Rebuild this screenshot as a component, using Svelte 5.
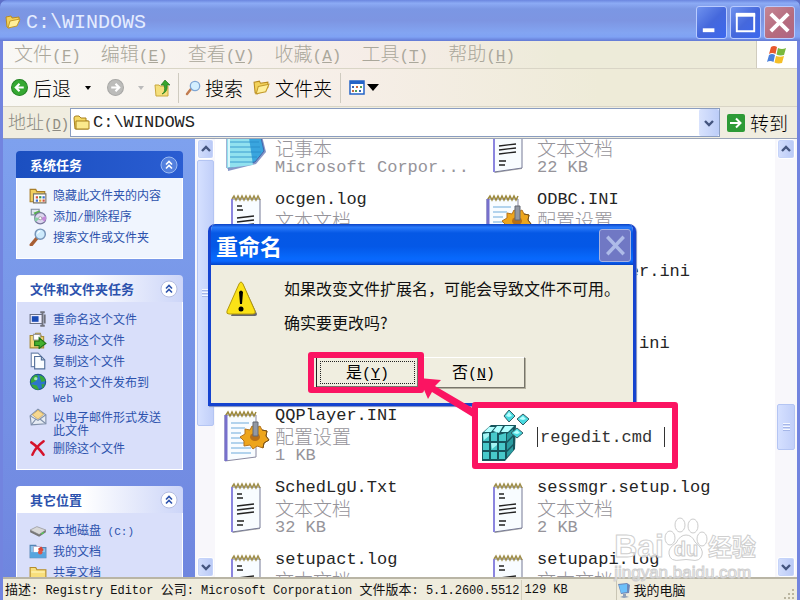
<script>
  const menus = [
    ['文件', 'F'], ['编辑', 'E'], ['查看', 'V'], ['收藏', 'A'], ['工具', 'T'], ['帮助', 'H'],
  ];
  const panels = [
    {
      title: '系统任务', main: true,
      links: [['contents', '隐藏此文件夹的内容'], ['programs', '添加/删除程序'], ['lens', '搜索文件或文件夹']],
    },
    {
      title: '文件和文件夹任务',
      links: [
        ['rename', '重命名这个文件'], ['move', '移动这个文件'], ['copy', '复制这个文件'],
        ['globe', '将这个文件发布到 Web'], ['mail', '以电子邮件形式发送此文件'], ['remove', '删除这个文件'],
      ],
    },
    { title: '其它位置', links: [['disk', '本地磁盘 (C:)'], ['docs', '我的文档'], ['folder', '共享文档']] },
  ];
  const files = [
    ['notepad', 'notepad.exe', '记事本', 'Microsoft Corpor...'],
    ['text', 'ntdtcsetup.log', '文本文档', '22 KB'],
    ['text', 'ocgen.log', '文本文档', '12 KB'],
    ['config', 'ODBC.INI', '配置设置', '1 KB'],
    ['text', 'ocmsn.log', '文本文档', '1 KB'],
    ['config', 'PowerPlayer.ini', '配置设置', '1 KB'],
    ['text', 'ocsetup.log', '文本文档', '2 KB'],
    ['config', 'PowerRead.ini', '配置设置', '1 KB'],
    ['config', 'QQPlayer.INI', '配置设置', '1 KB'],
    ['registry', 'regedit.cmd'],
    ['text', 'SchedLgU.Txt', '文本文档', '32 KB'],
    ['text', 'sessmgr.setup.log', '文本文档', '2 KB'],
    ['text', 'setupact.log', '文本文档', '1 KB'],
    ['text', 'setupapi.log', '文本文档', '1 KB'],
  ];
  let address = $state('C:\\WINDOWS');
  let newName = $state('regedit.cmd');

  // Splits a string so Latin and Chinese runs can take their own sizes.
  const runs = (text) => text.match(/[\x20-\x7e]+|[^\x20-\x7e]+/g) ?? [];
  const isLatin = (run) => /^[\x20-\x7e]/.test(run);
</script>

{#snippet mixed(text)}{#each runs(text) as run}<span class={isLatin(run) ? 'lat' : 'cjk'}>{run}</span>{/each}{/snippet}

{#snippet chevron(up)}
  <svg viewBox="0 0 10 8" width="10" height="8"><path d={up ? 'M1 6 5 2 9 6' : 'M1 2 5 6 9 2'} fill="none" stroke="#44557f" stroke-width="2.4" /></svg>
{/snippet}

{#snippet scrollbar(cls)}
  <div class="scroll {cls}">
    <button class="arrow" aria-label="向上滚动">{@render chevron(true)}</button>
    <div class="track"><div class="thumb"><i></i></div></div>
    <button class="arrow" aria-label="向下滚动">{@render chevron(false)}</button>
  </div>
{/snippet}

{#snippet openFolder(size)}
  <svg viewBox="0 0 16 16" width={size} height={size}>
    <path d="M1 3 6 2 7 4 14 3V8L4 14 2 13Z" fill="#f3d25a" stroke="#b98b20" />
    <path d="M5 7 15 5 12 12 3 14Z" fill="#ffef9a" stroke="#c39a2c" />
  </svg>
{/snippet}

{#snippet taskIcon(kind)}
  <svg class="task-icon" viewBox="0 0 16 16" width="18" height="18">
    {#if kind === 'contents'}
      <path d="M1 3h5l1 2h7v9H1z" fill="#f2cf5e" stroke="#a87e2a" />
      <path d="M4 7h11v8H4z" fill="#fff" stroke="#7b7564" />
      <path d="M6 9h2v2H6zM12 12h2v2h-2z" fill="#d2533c" /><path d="M9 9h2v2H9z" fill="#3a9a4a" /><path d="M12 9h2v2h-2zM6 12h2v2H6z" fill="#3c6fd2" /><path d="M9 12h2v2H9z" fill="#e2a52c" />
    {:else if kind === 'programs'}
      <path d="M2 2h7v5H2z" fill="#dfe6ef" stroke="#7d8ba0" /><path d="M4 5 9 3 12 6 7 9Z" fill="#57b04c" />
      <circle cx="10" cy="10" r="5" fill="#dcd6ef" stroke="#77779c" /><path d="M10 10 6 13A5 5 0 0 1 5 9Z" fill="#86cfa4" /><path d="M10 10 15 8A5 5 0 0 1 14 13Z" fill="#c58ada" /><circle cx="10" cy="10" r="1.4" fill="#fff" stroke="#888" stroke-width=".6" />
    {:else if kind === 'lens'}
      <path d="M7 9 2 15" stroke="#a85f34" stroke-width="3" stroke-linecap="round" /><circle cx="10" cy="5.500" r="4.500" fill="#cdeafc" stroke="#7794b8" stroke-width="1.300" /><path d="M7.500 5A3 3 0 0 1 10 2.800" stroke="#fff" fill="none" />
    {:else if kind === 'rename'}
      <path d="M1 4h11v8H1z" fill="#eef" stroke="#6a7186" /><path d="M2.500 5.500h6v5h-6z" fill="#1a4bb4" /><path d="M10 2h4M12 2v12M10 14h4M14 4v8" stroke="#70727c" stroke-width="1.600" />
    {:else if kind === 'move'}
      <path d="M1 4h4l1-2h4l1 3h2v10H1z" fill="#f2d878" stroke="#a58a3a" /><path d="M4 3h6v5H4z" fill="#fff" stroke="#999" /><path d="M5 9h4V6l6 5-6 4.500V13H5z" fill="#45b02e" stroke="#1f7217" />
    {:else if kind === 'copy'}
      <path d="M2 1h6l3 3v9H2z" fill="#fff" stroke="#6f86ab" /><path d="M5 4h6l3 3v8H5z" fill="#fafdff" stroke="#536f9a" /><path d="M11 4v3h3" fill="none" stroke="#536f9a" />
    {:else if kind === 'globe'}
      <circle cx="8" cy="8" r="6.800" fill="#2d75cb" stroke="#22568a" /><path d="M3 4Q6 0 8 3L6 7 2 9Q1 6 3 4M9 2Q14 3 14.500 7L11 8ZM2 10 7 11 9 15Q4 15 2 10M11 10 14 10 12 14Z" fill="#38aa38" /><circle cx="6" cy="5" r="1.500" fill="#a8e6b4" />
    {:else if kind === 'mail'}
      <path d="M1 7 8 1 15 6V14L2 15Z" fill="#e6ecf4" stroke="#8090aa" /><path d="M3 6 8 2 13 5.500 8 10Z" fill="#f7d890" stroke="#c9a352" stroke-width=".7" /><path d="M1 7 8 11 15 6M2 15 6 10M15 14 10 10" fill="none" stroke="#8090aa" />
    {:else if kind === 'remove'}
      <path d="M2 3Q8 7 13 14M13 2Q6 7 3 14" fill="none" stroke="#d5132b" stroke-width="2.200" stroke-linecap="round" />
    {:else if kind === 'disk'}
      <path d="M1 8 7 5 15 8 9 12Z" fill="#d8d8d8" stroke="#999" stroke-width=".7" /><path d="M1 8 9 12V14L1 10ZM9 12 15 8V10L9 14Z" fill="#777" /><path d="M11 11.500 13 10.200" stroke="#4ce04c" />
    {:else if kind === 'docs'}
      <path d="M1 3h5l1 2h8v9H1z" fill="#8bc5ee" stroke="#5384b5" /><path d="M4 4h6v6H4z" fill="#fff" stroke="#a9b" stroke-width=".6" /><path d="M8 6 11 4 13 7 10 10Z" fill="#db4535" /><path d="M1 9h14v5H1z" fill="#56a5df" /><circle cx="10" cy="9" r="2" fill="#db5545" />
    {:else}
      <path d="M1 4h5l1 2h8v9H1z" fill="#f8df7c" stroke="#b48d2c" /><path d="M2 8h12" stroke="#fff6bb" />
    {/if}
  </svg>
{/snippet}

{#snippet fileIcon(kind)}
  <svg class="file-icon" viewBox="0 0 48 54" width="48" height="54">
    {#if kind === 'notepad'}
      <path d="M4 4 36 4 43 32 33 44 5 51Z" fill="#8797c8" />
      <path d="M4 4 35 4 41 31 32 42 4 48Z" fill="#3aa5de" stroke="#4465a8" />
      <path d="M4 4H24L30 45 4 48Z" fill="#91e1ef" />
      <path d="M5 12H34M5 17H35M5 22H36M5 27H37M5 32H38M5 37H34M5 42H31" stroke="#278cc8" stroke-width=".8" />
      <path d="M6 5V47" stroke="#d7f7fb" stroke-width="2" />
    {:else if kind === 'text'}
      <path d="M10 8H37V49L10 53Z" fill="#aaa" />
      <path d="M9 7H37V48L9 52Z" fill="#f8fcff" stroke="#777b96" />
      <path d="M9 7V52" stroke="#8b85df" stroke-width="2" />
      <path d="M9 7l2-3 2 4 2-4 2 4 2-4 2 4 2-4 2 4 2-4 2 4 2-4 2 4 2-4 2 4" fill="none" stroke="#a08f4b" stroke-width="1.500" />
      <path d="M14 14h5M14 18h6M14 26 31 24M14 30 31 28M14 34 31 32M14 41h7M14 45h6" stroke="#222" stroke-width="1.300" />
    {:else if kind === 'config'}
      <path d="M2 7H33V49L2 53Z" fill="#f8fcff" stroke="#8a8aa0" />
      <path d="M3 7V53" stroke="#7770cc" stroke-width="3" />
      <path d="M3 7l2-3 2 4 2-4 2 4 2-4 2 4 2-4 2 4 2-4 2 4 2-4 2 4 2-4 2 4 2-4" fill="none" stroke="#9c893c" stroke-width="1.500" />
      <path d="M8 15H26M8 20H22M8 25H18M8 30H18M8 35H22M8 40H28M8 45H28" stroke="#9ac5e8" stroke-width="1.300" />
      <path d="M29 18 33 20 37 18 39 22 44 23 43 28 46 32 41 35 40 40 34 38 30 41 27 37 21 38 21 33 17 29 22 26 22 21 27 22Z" fill="#eda51c" stroke="#b6731a" />
      <path d="M39 22 44 23 43 28 46 32 41 35 40 40" fill="none" stroke="#75521c" />
      <ellipse cx="32" cy="29" rx="5" ry="4" fill="#b86f16" /><path d="M30 14h5v14h-5z" fill="#9298a3" stroke="#646873" />
    {:else}
      <g transform="translate(-4 2)">
        <path d="M1 23 10 15H35L34 39 24 51H1Z" fill="#17565e" />
        <path d="M2 24 8 23V31H2ZM10 23 16 22V31H10ZM18 25 25 23V31H18ZM2 33H8V40H2ZM10 33H16V40H10ZM18 33H24V40H18ZM2 42H8V49H2ZM10 42H16V49H10ZM18 42H24V49H18Z" fill="#48c9ca" />
        <path d="M3 22 8 17 14 17 10 22ZM12 21 16 16 22 16 18 23ZM20 22 24 16 33 16 27 22Z" fill="#b3ffff" />
        <path d="M26 24 32 19V25L26 31ZM26 33 32 27V34L26 40ZM26 42 32 36V41L26 47Z" fill="#2b9da1" />
        <path d="M2 24 8 23V26L3 30ZM10 33H16V35L11 39Z" fill="#a5f5f4" />
        <path d="M28 0 34 6 28 12 23 6ZM42 4 48 9 42 15 36 9ZM36 18 42 23 36 28 30 23Z" fill="#48d9df" stroke="#345d65" />
        <path d="M28 2 31 6 28 7 25 6ZM42 6 45 9 42 10 38 9ZM36 20 39 23 36 24 32 23Z" fill="#b7ffff" />
      </g>
    {/if}
  </svg>
{/snippet}

<div class="window">
  <header class="titlebar">
    {@render openFolder(16)}
    <h1>C:\WINDOWS</h1>
    <button class="cap" aria-label="最小化"><svg viewBox="0 0 30 32"><path d="M6 22h12v4H6z" fill="#fff" /></svg></button>
    <button class="cap" aria-label="最大化"><svg viewBox="0 0 30 32"><path d="M6 8h18v17H6z" fill="none" stroke="#fff" stroke-width="2" /><path d="M5 6h20v4H5z" fill="#fff" /></svg></button>
    <button class="cap shut" aria-label="关闭"><svg viewBox="0 0 30 32"><path d="M6 7 24 25M24 7 6 25" stroke="#fff" stroke-width="4" /></svg></button>
  </header>

  <div class="frame">
    <nav class="menubar">
      {#each menus as [label, key]}
        <button><span class="cjk">{label}</span><span class="lat">(<u>{key}</u>)</span></button>
      {/each}
      <div class="flag">
        <svg viewBox="0 0 20 20" width="22" height="20">
          <path d="M4 2Q7 0 10 2L8.500 9Q5 7 2 9Z" fill="#e8582c" /><path d="M11 3Q15 5 19 3L17 10Q13 11 9.500 9.500Z" fill="#79b83e" />
          <path d="M2 10Q5 8 8 10L6.500 17Q3 15 0 17Z" fill="#4a80dc" /><path d="M9 11Q13 12.500 17 11L15 18Q11 19 7.500 17.500Z" fill="#f5bf28" />
        </svg>
      </div>
    </nav>

    <div class="toolbar">
      <button class="tool">
        <svg viewBox="0 0 16 16" width="17" height="17"><circle cx="8" cy="8" r="7.500" fill="#35a832" stroke="#268426" /><path d="M12 8H5M8 4.500 4.500 8 8 11.500" fill="none" stroke="#fff" stroke-width="2" /></svg>
        后退
      </button>
      <button class="tool drop" aria-label="后退历史"><svg viewBox="0 0 6 4" width="6" height="4"><path d="M0 0h6L3 4z" /></svg></button>
      <button class="tool fwd" aria-label="前进"><svg viewBox="0 0 16 16" width="17" height="17"><circle cx="8" cy="8" r="7.500" fill="#bcbcba" stroke="#a8a8a6" /><path d="M4 8h7M8 4.500 11.500 8 8 11.500" fill="none" stroke="#fff" stroke-width="2" /></svg></button>
      <button class="tool drop dim" aria-label="前进历史"><svg viewBox="0 0 6 4" width="6" height="4"><path d="M0 0h6L3 4z" /></svg></button>
      <button class="tool up" aria-label="向上"><svg viewBox="0 0 16 18" width="16" height="18"><path d="M1 6h4l1 1h8v10H2z" fill="#f5df7b" stroke="#c9a83e" /><path d="M8 15Q12 13 10 6H7L11 1 16 6H13Q14 13 8 15Z" fill="#37a52d" stroke="#23781e" stroke-width=".7" /></svg></button>
      <i class="sep"></i>
      <button class="tool find"><svg viewBox="0 0 16 16" width="16" height="16"><path d="M6 9 2 14" stroke="#c27c50" stroke-width="2.500" stroke-linecap="round" /><circle cx="10" cy="6" r="4.700" fill="#d3efff" stroke="#7fa6d4" stroke-width="1.300" /></svg>搜索</button>
      <button class="tool dirs">{@render openFolder(17)}文件夹</button>
      <i class="sep"></i>
      <button class="tool view" aria-label="查看方式">
        <svg viewBox="0 0 16 15" width="16" height="15"><path d="M1 1h14v13H1z" fill="#fff" stroke="#2464c8" stroke-width="1.500" /><path d="M1 1h14v3H1z" fill="#2464c8" /><path d="M3 6h2v2H3zM10 10h2v2h-2z" fill="#3a63b5" /><path d="M7 6h2v2H7zM3 10h2v2H3z" fill="#c76a43" /><path d="M11 6h2v2h-2zM6 10h2v2H6z" fill="#55a05a" /></svg>
        <svg viewBox="0 0 12 7" width="12" height="7"><path d="M0 0h12L6 7z" /></svg>
      </button>
    </div>

    <div class="addressbar">
      <label for="address"><span class="cjk">地址</span><span class="lat">(<u>D</u>)</span></label>
      <div class="combo">
        <svg viewBox="0 0 17 15" width="17" height="15"><path d="M1 3Q1 1 3 1H6L8 3H13V6H15V14H2Z" fill="#f5d963" stroke="#a8811f" /><path d="M3 6H16V14H3Z" fill="#fbe98c" stroke="#a8811f" /></svg>
        <input id="address" bind:value={address} />
        <button aria-label="地址列表">{@render chevron(false)}</button>
      </div>
      <button class="go"><svg viewBox="0 0 18 18" width="18" height="18"><rect width="18" height="18" rx="2" fill="#2d9a36" /><path d="M3 9h10M9 4.500 13.500 9 9 13.500" fill="none" stroke="#fff" stroke-width="2" /></svg>转到</button>
    </div>

    <div class="content">
      <aside>
        {#each panels as panel}
          <section class={{ main: panel.main }}>
            <h2>
              {panel.title}
              <button aria-label="折叠"><svg viewBox="0 0 18 18" width="18" height="18"><circle cx="9" cy="9" r="8" class="disc" /><path d="M6 8.500 9 5.500 12 8.500M6 12.500 9 9.500 12 12.500" fill="none" stroke="currentColor" stroke-width="1.600" /></svg></button>
            </h2>
            <ul>
              {#each panel.links as [icon, label]}
                <li>{@render taskIcon(icon)}<a href="#{icon}">{@render mixed(label)}</a></li>
              {/each}
            </ul>
          </section>
        {/each}
      </aside>
      {@render scrollbar('left')}
      <main>
        <div class="files">
          {#each files as [icon, name, type, detail]}
            <div class="file">
              {@render fileIcon(icon)}
              {#if type}
                <div class="info">
                  <p class="name">{@render mixed(name)}</p>
                  <p>{@render mixed(type)}</p>
                  <p>{@render mixed(detail)}</p>
                </div>
              {:else}
                <input class="edit" aria-label="文件名" bind:value={newName} />
              {/if}
            </div>
          {/each}
        </div>
      </main>
      {@render scrollbar('right')}
    </div>

    <footer>
      <p class="desc">{@render mixed('描述: Registry Editor 公司: Microsoft Corporation 文件版本: 5.1.2600.5512')}</p>
      <p class="size">{@render mixed('129 KB')}</p>
      <p class="zone">
        <svg viewBox="0 0 14 16" width="14" height="16"><path d="M1 2 10 1 13 3 12 11 4 12Z" fill="#6c87b8" /><path d="M2 3 10 2V10L4 11Z" fill="#6cc0fa" /><path d="M6 12h3v2l3 1-5 1-4-1 3-1z" fill="#8fa0b8" /></svg>
        {@render mixed('我的电脑')}
      </p>
      <svg class="grip" viewBox="0 0 12 12" width="12" height="12"><path d="M9 1h2v2H9zM9 5h2v2H9zM9 9h2v2H9zM5 5h2v2H5zM5 9h2v2H5zM1 9h2v2H1z" fill="#bbb6a0" /></svg>
    </footer>
  </div>

  <div class="watermark">
    <div class="brand">
      <span>Bai</span>
      <svg viewBox="0 0 44 48" width="44" height="48"><g fill="#fff" fill-opacity=".8" stroke="#ccc"><ellipse cx="6" cy="22" rx="5" ry="7" /><ellipse cx="16" cy="9" rx="5" ry="7" /><ellipse cx="29" cy="10" rx="5" ry="7" /><ellipse cx="38" cy="23" rx="5" ry="7" /><path d="M22 19Q28 19 31 26 40 33 38 39 36 46 27 44 22 43 17 44 6 46 5 38 4 32 12 27 16 19 22 19Z" /></g><text x="22" y="40" text-anchor="middle">du</text></svg>
      <span class="cn">经验</span>
    </div>
    <div class="site">jingyan.baidu.com</div>
  </div>

  <div class="dialog" role="dialog" aria-labelledby="dialog-title">
    <div class="dialog-title">
      <h2 id="dialog-title">重命名</h2>
      <button aria-label="关闭"><svg viewBox="0 0 30 32"><path d="M7 7 24 25M24 7 7 25" stroke="#aebbe8" stroke-width="3.500" /></svg></button>
    </div>
    <div class="dialog-body">
      <svg viewBox="0 0 32 36" width="32" height="36"><path d="M17 3 31 33Q31 35 29 35H5Z" fill="#66666f" /><path d="M15 1Q16 1 17 3L29 30Q30 33 27 33H3Q0 33 1 30L13 3Q14 1 15 1Z" fill="#fbe216" stroke="#b3990d" /><path d="M13 11Q15 8 17 11L16 23H14Z" /><circle cx="15" cy="28" r="2.500" /></svg>
      <p>如果改变文件扩展名，可能会导致文件不可用。<br />确实要更改吗?</p>
    </div>
    <div class="actions">
      <button class="yes"><span class="cjk">是</span><span class="lat">(<u>Y</u>)</span></button>
      <button><span class="cjk">否</span><span class="lat">(<u>N</u>)</span></button>
    </div>
  </div>

  <div class="mark on-yes"></div>
  <div class="mark on-file"></div>
  <svg class="pointer" viewBox="0 0 60 46" width="60" height="46"><path d="M1 4 23 6 17 12 58 36V45L14 18 10 25Z" fill="#fb1462" /></svg>
</div>

<style>
  :global(body) { margin: 0; background: #5d6fc8; }
  * { box-sizing: border-box; }
  h1, h2, p, ul { margin: 0; padding: 0; }
  button { margin: 0; padding: 0; border: 0; background: none; font: inherit; color: inherit; }
  input { border: 0; outline: 0; padding: 0; min-width: 0; }
  svg { display: block; flex: none; }
  .window {
    position: relative; height: 100vh; display: flex; flex-direction: column; overflow: hidden;
    font-family: "Liberation Mono", "Noto Sans CJK SC", monospace; font-size: 17px;
  }
  .cjk { font-family: "Noto Sans CJK SC", sans-serif; font-weight: 300; }
  .lat { font-family: "Liberation Mono", monospace; white-space: pre; }

  .titlebar {
    flex: none; height: 41px; display: flex; align-items: center; gap: 3px; padding: 3px 5px 0 5px;
    border-radius: 7px 7px 0 0;
    background: linear-gradient(#6b86df, #8cabf5 8%, #7b97e4 22%, #7d95e2 50%, #83a5f2 80%, #7fa2f4 90%, #6379d4);
  }
  h1 { flex: 1; padding-left: 2px; font-size: 20px; font-weight: 400; color: #e4ecff; }
  .cap { flex: none; width: 31px; height: 33px; border: 1px solid #b9cbff; border-radius: 3px; background: linear-gradient(135deg, #6f92ee, #4568dc 50%, #3c67ee); }
  .cap svg, .dialog-title svg { width: 100%; height: 100%; }
  .shut { background: linear-gradient(135deg, #c48694, #b56b7e 60%, #ae6685); }

  .frame { flex: 1; min-height: 0; display: flex; flex-direction: column; border: solid #7284df; border-width: 0 3px; }
  .menubar {
    flex: none; height: 28px; display: flex; align-items: center; gap: 20px; padding-left: 11px;
    color: #aaa79b; border-bottom: 1px solid #d9d5c6; background: linear-gradient(90deg, #f9f8f5, #f5ece6 50%, #edebd9 70%);
  }
  .menubar button { font-size: 16px; line-height: 26px; white-space: nowrap; }
  .menubar .cjk { font-size: 19px; }
  .flag { margin-left: auto; width: 41px; height: 27px; display: grid; place-items: center; background: #fff; border-left: 1px solid #d0ccbe; }
  .toolbar {
    flex: none; height: 38px; display: flex; align-items: center; padding-left: 8px;
    background: linear-gradient(90deg, #f9f8f4, #f6eee7 45%, #eeebd8 75%); border-bottom: 1px solid #d9d5c6;
  }
  .tool { display: flex; align-items: center; gap: 5px; font-family: "Noto Sans CJK SC", sans-serif; font-size: 19px; font-weight: 300; line-height: 28px; white-space: nowrap; }
  .drop { padding-left: 14px; }
  .fwd { padding-left: 16px; }
  .dim { fill: #bbb; }
  .up { padding-left: 10px; }
  .find { padding-left: 6px; gap: 4px; }
  .dirs { padding-left: 10px; }
  .view { padding-left: 8px; gap: 2px; }
  .sep { width: 1px; height: 30px; margin-left: 8px; background: #cfcbc0; }
  .addressbar { flex: none; height: 31px; display: flex; align-items: center; background: #f0ede0; }
  .addressbar label { width: 67px; padding-left: 5px; color: #8d8b83; font-size: 14px; line-height: 28px; white-space: nowrap; }
  .addressbar label .cjk { font-size: 18px; }
  .combo { flex: 1; height: 29px; display: flex; align-items: center; gap: 3px; padding-left: 2px; border: 1px solid #8a9dc0; background: #fff; }
  .combo input { flex: 1; background: none; font: 17px "Liberation Mono", monospace; color: #222; }
  .combo button { width: 20px; height: 27px; display: grid; place-items: center; background: linear-gradient(90deg, #d9e3fd, #bccdf8); border-radius: 2px; }
  .go { display: flex; align-items: center; gap: 5px; padding: 0 9px 0 7px; font-family: "Noto Sans CJK SC", sans-serif; font-size: 19px; font-weight: 300; line-height: 28px; white-space: nowrap; }

  .content { flex: 1; min-height: 0; display: flex; background: #fff; border-top: 1px solid #9aa4b8; }
  aside { flex: none; width: 192px; padding: 12px 12px 0 13px; overflow: hidden; display: flex; flex-direction: column; gap: 16px; background: linear-gradient(#7ea1ee, #6f86df); }
  section { flex: none; color: #2c52ad; }
  section h2 { display: flex; justify-content: space-between; align-items: center; height: 27px; padding: 0 5px 0 14px; font: 700 13px "Noto Sans CJK SC", sans-serif; border-radius: 4px 4px 0 0; background: linear-gradient(90deg, #fff 40%, #ccd5f8); }
  .disc { fill: #fff; stroke: #b3bce0; }
  .main h2 { color: #fff; background: linear-gradient(90deg, #1b4fc0, #2a5dd2); }
  .main .disc { fill: #5380de; stroke: #9cbbf2; }
  ul { list-style: none; display: flex; flex-direction: column; gap: 3px; padding: 8px 12px 12px; background: #d9dffa; border: 1px solid #fff; border-top: 0; }
  .main ul { background: #f0f5fe; }
  li { display: flex; gap: 6px; min-height: 18px; }
  a { flex: 1; min-width: 0; padding-top: 2px; color: inherit; text-decoration: none; font-family: "Noto Sans CJK SC", sans-serif; font-size: 12px; line-height: 13px; }
  a .cjk { font-weight: 400; }
  a .lat { font-size: 11px; line-height: 1; white-space: pre-wrap; }

  .scroll { flex: none; width: 20px; padding: 0 1px 0 2px; display: flex; flex-direction: column; background: #f8f7fb; }
  .arrow { flex: none; height: 20px; display: grid; place-items: center; border: 1px solid #fff; border-radius: 3px; background: linear-gradient(90deg, #d3defc, #b9c9f6); box-shadow: inset 0 0 0 1px #c5d3f9; }
  .track { flex: 1; display: flex; flex-direction: column; padding-top: 1px; }
  .thumb { height: 67%; display: grid; place-items: center; border: 1px solid #b4c5f3; border-radius: 2px; background: linear-gradient(90deg, #d5e0ff, #c1cff9); }
  .thumb i { width: 7px; height: 8px; background: repeating-linear-gradient(#f4f7ff 0 1px, #a5b6e8 1px 2px, transparent 2px 3px); }
  .right { width: 22px; padding: 0 2px; }
  .right .track { justify-content: flex-end; padding-bottom: 107px; }
  .right .thumb { height: 46px; }

  main { flex: 1; min-width: 0; overflow: hidden; }
  .files { display: grid; grid-template-columns: 262px 262px; row-gap: 12px; margin-top: -21px; padding-left: 8px; }
  .file { display: flex; gap: 4px; height: 60px; }
  .file-icon { margin-top: 2px; overflow: visible; }
  .info { color: #96949a; white-space: nowrap; }
  .info p { display: flex; align-items: center; height: 20px; line-height: 20px; font-size: 17px; }
  .info .cjk { font-size: 19px; }
  .info .name { color: #252525; }
  .edit { align-self: center; width: 128px; height: 20px; margin-top: 2px; border: solid #333; border-width: 0 1px; padding-left: 2px; font: 17px "Liberation Mono", monospace; color: #333; }

  footer { flex: none; height: 23px; display: flex; align-items: center; padding: 0 2px; font-size: 12px; line-height: 20px; background: #efecdd; border-top: 2px solid #b9b5a5; white-space: nowrap; color: #111; }
  footer .cjk { font-size: 13px; font-weight: 400; }
  .desc { flex: none; padding-right: 1px; }
  .size { flex: none; width: 95px; padding-left: 3px; border-left: 1px solid #d3cfbe; }
  .zone { flex: 1; display: flex; align-items: center; border-left: 1px solid #c9c5b4; }
  .zone svg { margin-right: 3px; }
  .grip { align-self: flex-end; }

  .watermark { position: absolute; right: 44px; bottom: 18px; color: rgba(255, 255, 255, .8); -webkit-text-stroke: 1px #cfcfcf; font-family: "Liberation Sans", sans-serif; }
  .brand { display: flex; align-items: flex-end; font-size: 32px; line-height: 36px; font-weight: 700; }
  .brand text { font: 700 20px "Liberation Sans", sans-serif; fill: #fff; stroke: #ccc; stroke-width: 1px; }
  .cn { font-family: "Noto Sans CJK SC", sans-serif; font-size: 24px; }
  .site { font-size: 17px; line-height: 18px; }

  .dialog { position: absolute; left: 208px; top: 224px; width: 428px; height: 182px; display: flex; flex-direction: column; border: 3px solid #1543cf; border-top: 0; border-radius: 7px 7px 0 0; overflow: hidden; background: #efeddf; box-shadow: 1px 1px 1px #7d8bbf; }
  .dialog-title { flex: none; height: 41px; display: flex; align-items: center; padding: 1px 2px 0 5px; background: linear-gradient(#0a41c4, #2b7bfb 8%, #0558e5 22%, #0458e7 55%, #0768fb 82%, #0b68ff 90%, #0544c8); }
  .dialog-title h2 { flex: 1; font: 600 22px "Noto Sans CJK SC", sans-serif; line-height: 30px; color: #fff; }
  .dialog-title button { width: 32px; height: 33px; border: 1px solid #a7b2e0; border-radius: 3px; background: #7078c4; }
  .dialog-body { flex: 1; display: flex; gap: 26px; padding: 16px 0 0 15px; }
  .dialog-body p { margin-top: -10px; font: 16px "Noto Sans CJK SC", sans-serif; font-weight: 400; line-height: 34px; color: #111; white-space: nowrap; }
  .actions { display: flex; gap: 3px; padding: 0 0 15px 105px; }
  .actions button { width: 103px; height: 31px; border: 1px solid; border-color: #fff #77756b #77756b #fff; box-shadow: 1px 1px #b3b09f; background: #f0eee0; font-size: 15px; line-height: 20px; }
  .actions .cjk { font-size: 16px; font-weight: 400; }
  .actions .yes { border: 1px solid #222; outline: 1px dotted #222; outline-offset: -5px; box-shadow: inset -1px -1px #77756b; }

  .mark { position: absolute; border: 6px solid #fb1462; border-radius: 3px; }
  .on-yes { left: 308px; top: 352px; width: 116px; height: 41px; }
  .on-file { left: 472px; top: 402px; width: 206px; height: 67px; }
  .pointer { position: absolute; left: 418px; top: 374px; }
</style>
